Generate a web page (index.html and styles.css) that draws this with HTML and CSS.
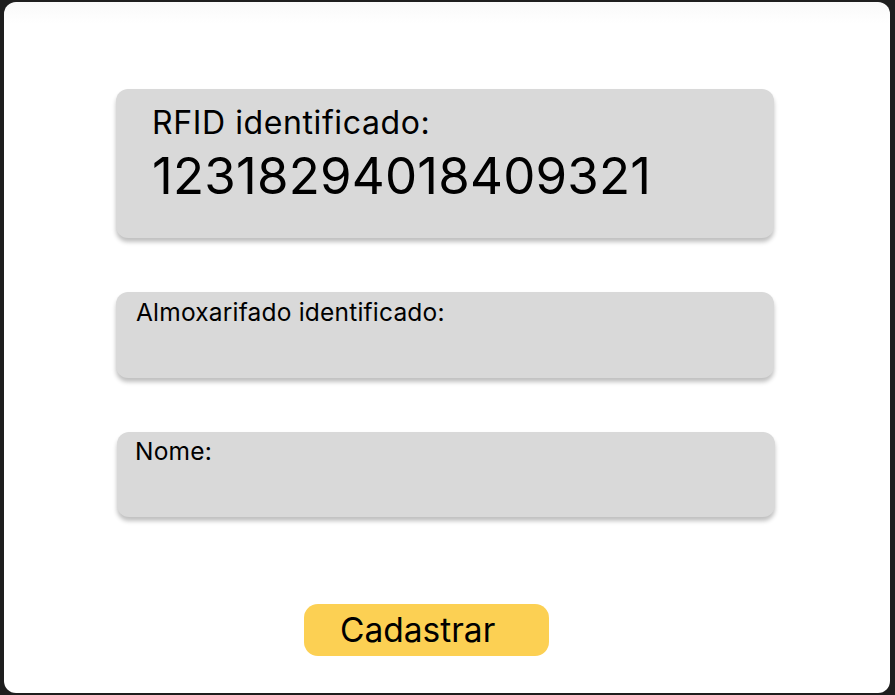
FILE: index.html
```html
<!DOCTYPE html>
<html lang="pt">
<head>
<meta charset="utf-8">
<link rel="stylesheet" href="styles.css">
</head>
<body>
<div class="frame">
  <div class="field field-rfid">
    <div class="label-lg">RFID identificado:</div>
    <div class="value">12318294018409321</div>
  </div>
  <div class="field field-almox">
    <div class="label">Almoxarifado identificado:</div>
  </div>
  <div class="field field-nome">
    <div class="label">Nome:</div>
  </div>
  <button class="btn">Cadastrar</button>
</div>
</body>
</html>
```
FILE: styles.css
```css
html, body {
  margin: 0;
  padding: 0;
  background: #1e1e1e;
  font-family: Inter, "Noto Sans", sans-serif;
  color: #000;
}
body {
  padding: 2px 5px 2px 4px;
  height: 695px;
  box-sizing: border-box;
}
.frame {
  background: linear-gradient(#f9f9f9 0, #ffffff 22px);
  border-radius: 12px;
  height: 691px;
  box-sizing: border-box;
  padding: 87px 0 0 112px;
  display: flex;
  flex-direction: column;
  align-items: flex-start;
}
.field {
  width: 658px;
  background: #d9d9d9;
  border-radius: 12px;
  box-shadow: 0 4px 4px rgba(0, 0, 0, 0.25);
  box-sizing: border-box;
}
.field-rfid {
  height: 149px;
  padding: 16px 0 0 36px;
}
.field-almox {
  height: 86px;
  margin-top: 54px;
  padding: 6px 0 0 20px;
}
.field-nome {
  height: 85px;
  margin-top: 54px;
  margin-left: 1px;
  padding: 5px 0 0 18px;
}
.label-lg {
  font-size: 32px;
  line-height: 36px;
  letter-spacing: 0.6px;
}
.value {
  font-size: 51px;
  line-height: 56px;
  margin-top: 7px;
  letter-spacing: 0.2px;
}
.label {
  font-size: 24.5px;
  line-height: 28px;
  letter-spacing: 0.2px;
}
.btn {
  margin: 87px 0 0 188px;
  width: 245px;
  height: 52px;
  border: none;
  border-radius: 14px;
  background: #fcd053;
  font-family: inherit;
  font-size: 33.5px;
  color: #000;
  text-align: left;
  padding: 0 0 0 36px;
  line-height: 52px;
}
```
